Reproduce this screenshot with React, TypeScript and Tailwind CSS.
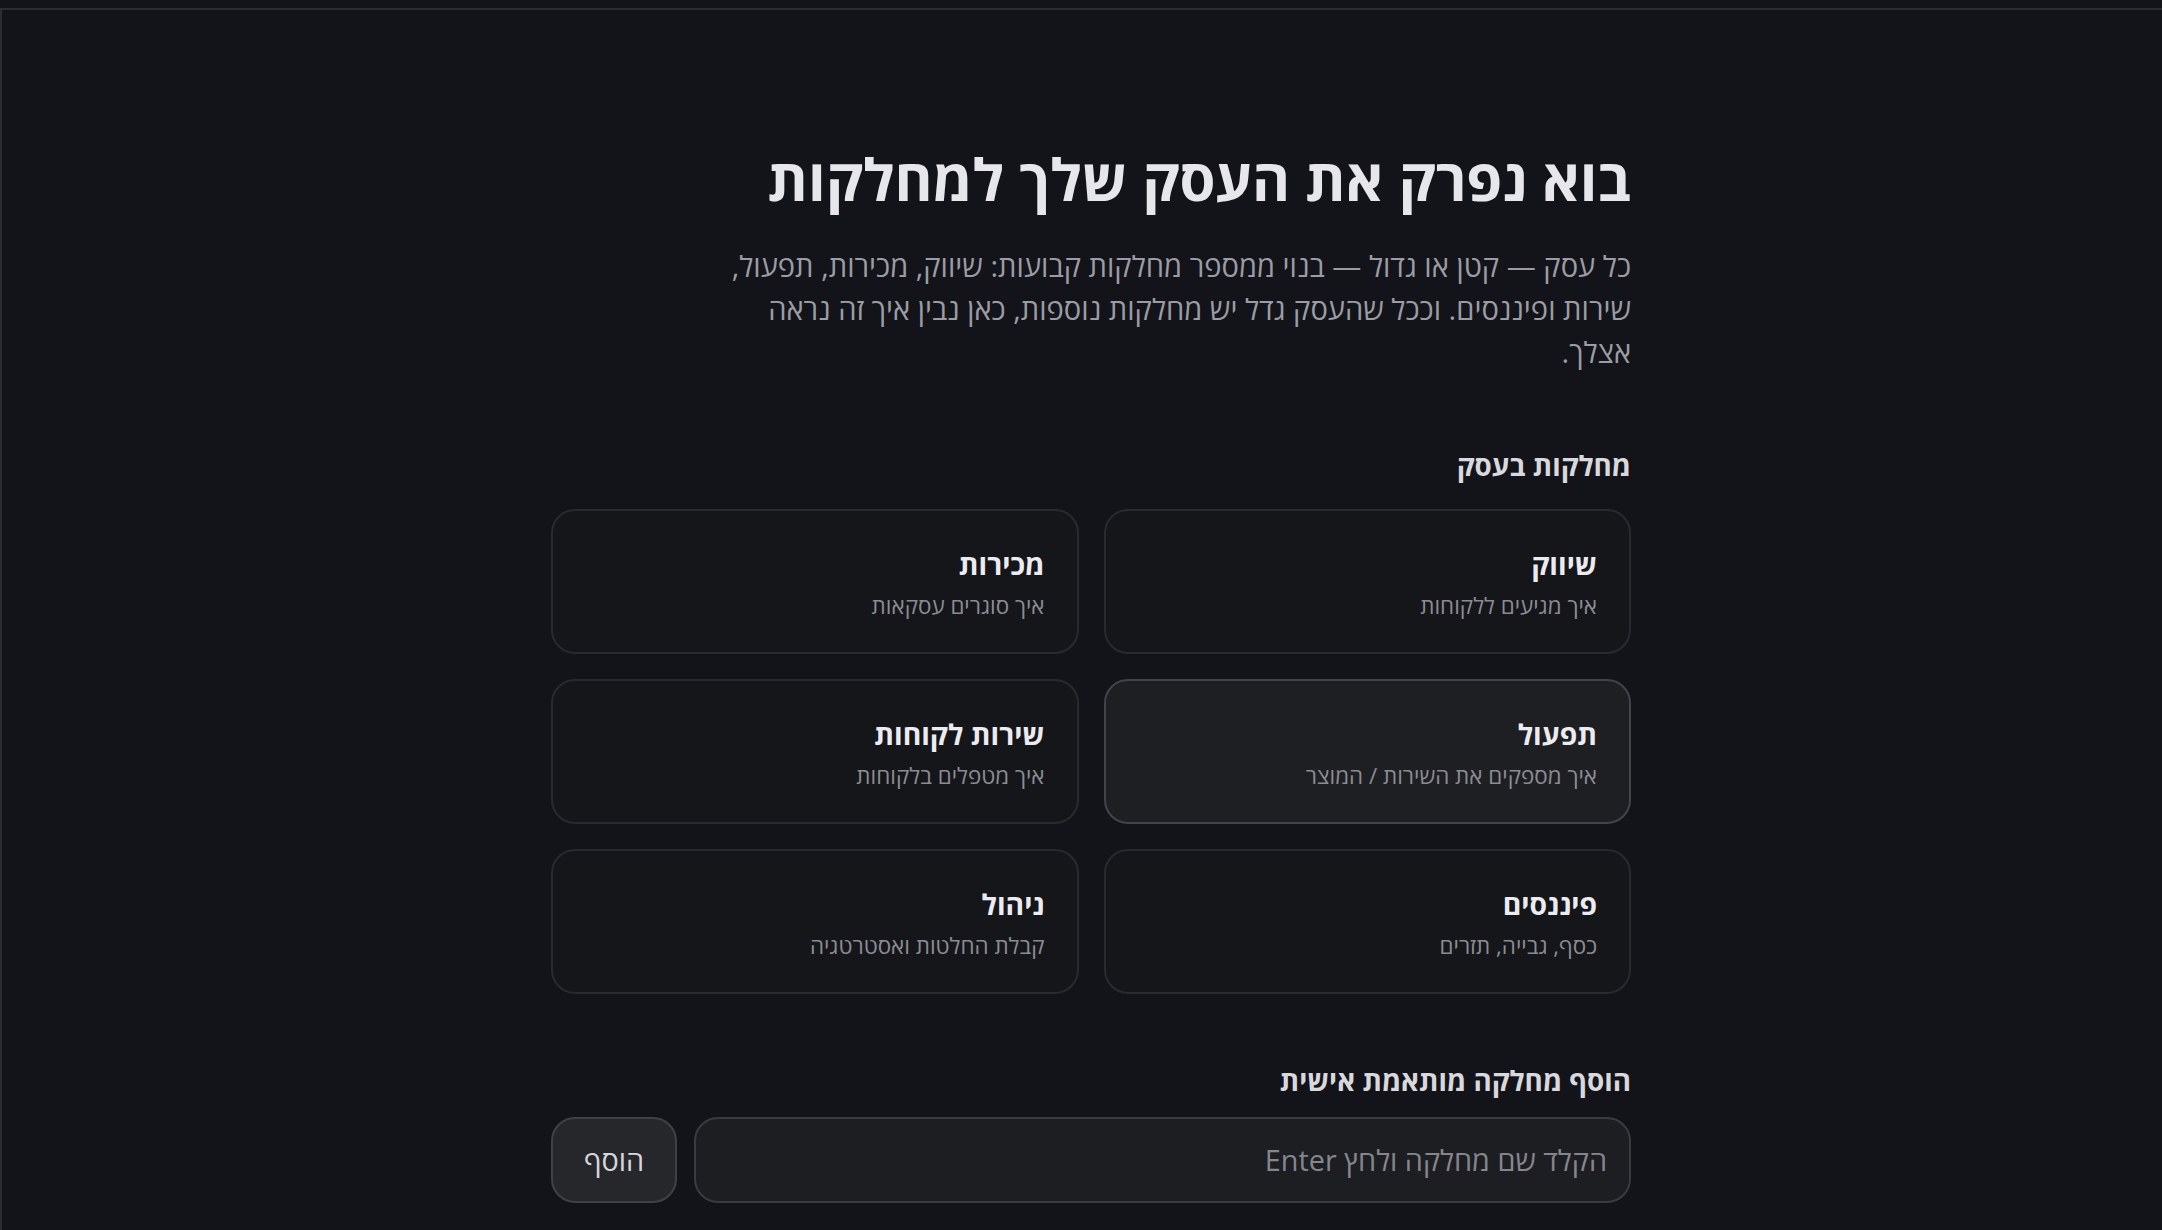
import { useState } from "react";

type Department = {
  id: string;
  title: string;
  description: string;
};

const DEPARTMENTS: Department[] = [
  { id: "marketing", title: "שיווק", description: "איך מגיעים ללקוחות" },
  { id: "sales", title: "מכירות", description: "איך סוגרים עסקאות" },
  { id: "operations", title: "תפעול", description: "איך מספקים את השירות / המוצר" },
  { id: "support", title: "שירות לקוחות", description: "איך מטפלים בלקוחות" },
  { id: "finance", title: "פיננסים", description: "כסף, גבייה, תזרים" },
  { id: "management", title: "ניהול", description: "קבלת החלטות ואסטרטגיה" },
];

const FONT = "font-['Open_Sans','Noto_Sans','DejaVu_Sans',sans-serif]";

export default function App() {
  const [selected, setSelected] = useState("operations");
  const [custom, setCustom] = useState("");

  return (
    <div dir="rtl" className={`min-h-screen bg-[#131419] pt-2 ${FONT}`}>
      <div className="min-h-[1222px] border-t-2 border-l-2 border-[#2c2d33] pl-[18px] pt-[134px]">
        <div className="mx-auto w-[1080px]">
          <h1 className="text-[58px] font-bold leading-[1.2] text-[#e6e6eb]">
            בוא נפרק את העסק שלך למחלקות
          </h1>
          <p className="mt-[31px] max-w-[920px] text-[29.1px] leading-[43.2px] text-[#9b9ca4]">
            כל עסק — קטן או גדול — בנוי ממספר מחלקות קבועות: שיווק, מכירות, תפעול,
            שירות ופיננסים. וככל שהעסק גדל יש מחלקות נוספות, כאן נבין איך זה נראה
            אצלך.
          </p>

          <h2 className="mt-[70px] text-[27.8px] font-bold leading-[43.2px] text-[#d8d8dd]">
            מחלקות בעסק
          </h2>
          <div className="mt-[22px] grid grid-cols-2 gap-[25px]">
            {DEPARTMENTS.map((dept) => {
              const active = selected === dept.id;
              return (
                <button
                  key={dept.id}
                  type="button"
                  onClick={() => setSelected(dept.id)}
                  className={`flex h-[145px] flex-col items-start justify-center gap-[3px] rounded-[24px] border-2 px-[32px] text-right ${
                    active
                      ? "border-[#434449] bg-[#1e1f23]"
                      : "border-[#292a2f] bg-[#15161a]"
                  }`}
                >
                  <span className="text-[28.3px] font-bold leading-[44.8px] text-[#ececf0]">
                    {dept.title}
                  </span>
                  <span className="text-[22.4px] leading-[32px] text-[#8b8c93]">
                    {dept.description}
                  </span>
                </button>
              );
            })}
          </div>

          <h2 className="mt-[65px] text-[27.8px] font-bold leading-[43.2px] text-[#d8d8dd]">
            הוסף מחלקה מותאמת אישית
          </h2>
          <div className="mt-[14px] flex gap-[17px]">
            <input
              value={custom}
              onChange={(e) => setCustom(e.target.value)}
              placeholder="הקלד שם מחלקה ולחץ Enter"
              className="h-[86px] flex-1 rounded-[24px] border-2 border-[#3a3b41] bg-[#1d1e22] px-[22px] text-[28.8px] text-[#e6e6eb] outline-none placeholder:text-[#85868d]"
            />
            <button
              type="button"
              className="h-[86px] w-[126px] rounded-[24px] border-2 border-[#404147] bg-[#26272b] text-[28.8px] text-[#d6d6db]"
            >
              הוסף
            </button>
          </div>
        </div>
      </div>
    </div>
  );
}
